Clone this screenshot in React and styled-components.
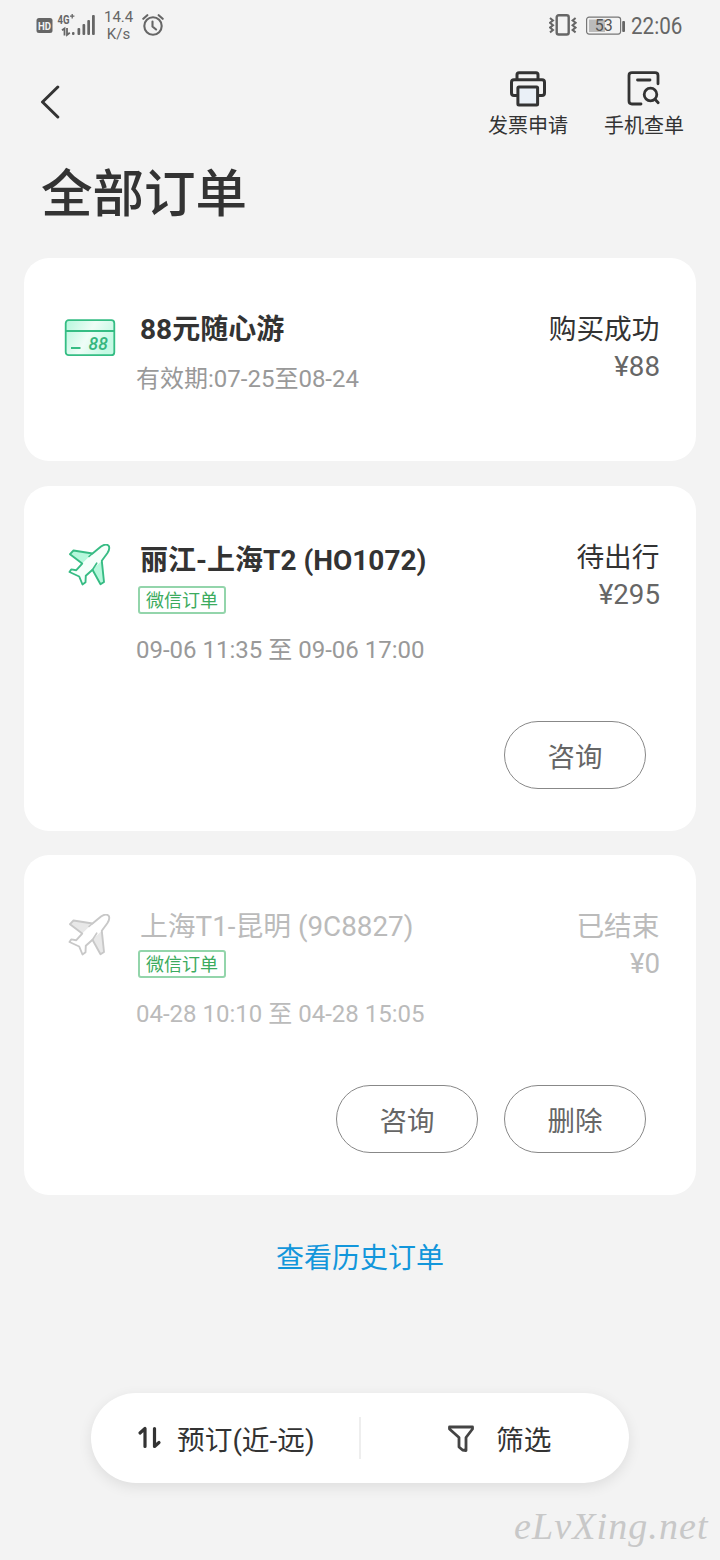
// libraries
import styled, { createGlobalStyle } from "styled-components"

const GlobalStyle = createGlobalStyle`
  * {
    box-sizing: border-box;
  }

  body {
    margin: 0;
    background: #f3f3f3;
    color: #333;
    font-family: Roboto, "Noto Sans CJK SC", sans-serif;
  }

  svg {
    display: block;
    flex: none;
  }
`

const Page = styled.main`
  display: flex;
  flex-direction: column;
  width: 720px;
  height: 1560px;
  overflow: hidden;
  background: #f3f3f3;
`

const StatusBar = styled.div`
  display: flex;
  justify-content: space-between;
  height: 50px;
  padding: 0 38px 0 36px;
  color: #666;
`

const StatusGroup = styled.div`
  display: flex;
  align-items: center;
`

const Speed = styled.div`
  width: 29px;
  margin: 1px 9px 0 8px;
  font-size: 15px;
  line-height: 17px;
  text-align: center;
`

const Battery = styled.div`
  margin: 1px 5px 0 9px;
`

const Clock = styled.time`
  width: 51px;
  height: 50px;
  font-size: 24px;
  line-height: 52px;
  white-space: nowrap;

  span {
    display: inline-block;
    transform: scaleX(0.86);
    transform-origin: left;
  }
`

const NavBar = styled.header`
  display: flex;
  justify-content: space-between;
  height: 106px;
  padding: 20px 36px 0 40px;
`

const BackButton = styled.button`
  align-self: flex-start;
  margin-top: 15px;
  padding: 0;
  border: none;
  background: none;
`

const NavActions = styled.nav`
  display: flex;
  gap: 36px;
`

const NavAction = styled.a`
  display: flex;
  flex-direction: column;
  align-items: center;
  width: 80px;
  height: 70px;
  gap: 5px;
  font-size: 20px;
  line-height: 26px;
  white-space: nowrap;
`

const PageTitle = styled.h1`
  height: 102px;
  margin: 0;
  padding: 2px 0 0 41px;
  font-size: 51.5px;
  font-weight: 500;
  line-height: 74px;
`

const OrderList = styled.section`
  display: flex;
  flex-direction: column;
  gap: 24.5px;
  padding: 0 24px;
`

const Card = styled.article`
  height: ${(p) => p.$height}px;
  padding: 53px 36px 0 40px;
  border-radius: 25px;
  background: #fff;
`

const CardTop = styled.div`
  display: flex;
`

const IconBox = styled.div`
  width: 72px;
  padding-top: ${(p) => p.$top}px;
`

const Info = styled.div`
  flex: 1;
`

const OrderTitle = styled.h2`
  height: ${(p) => (p.$tall ? 42 : 37)}px;
  margin: 0 0 0 4px;
  color: ${(p) => (p.$ended ? "#bbb" : "#333")};
  font-size: ${(p) => (p.$ended ? 27.8 : 28)}px;
  font-weight: ${(p) => (p.$ended ? 400 : 700)};
  line-height: ${(p) => (p.$tall ? 43 : 38)}px;
  white-space: nowrap;
`

const Tag = styled.div`
  width: 88px;
  height: 28px;
  margin: 5px 0 18px 2px;
  border: 2px solid #93d5ab;
  border-radius: 3px;
  color: #3cab5e;
  font-size: 18px;
  line-height: 26px;
  text-align: center;
`

const Period = styled.div`
  height: 36px;
  margin-top: ${(p) => p.$top || 0}px;
  color: ${(p) => (p.$ended ? "#bbb" : "#999")};
  font-size: 24px;
  line-height: 37px;
  white-space: nowrap;
`

const State = styled.div`
  color: ${(p) => (p.$ended ? "#bbb" : "#333")};
  font-size: 27.7px;
  line-height: 38px;
  text-align: right;
  white-space: nowrap;
`

const StateName = styled.div`
  height: 37px;
  padding-right: 0.5px;
`

const Price = styled.div`
  color: ${(p) => (p.$ended ? "#bbb" : "#666")};
`

const CardActions = styled.div`
  display: flex;
  justify-content: flex-end;
  gap: 26px;
  margin-top: 53px;
  padding-right: 14px;
`

const PillButton = styled.button`
  width: 142px;
  height: 68px;
  padding: 5px 0 0;
  border: 1px solid #888;
  border-radius: 34px;
  background: #fff;
  color: #666;
  font-family: inherit;
  font-size: 27.5px;
  line-height: 61px;
`

const HistoryLink = styled.a`
  align-self: center;
  height: 40px;
  margin-top: 44px;
  color: #1296db;
  font-size: 28px;
  line-height: 40px;
`

const FilterBar = styled.footer`
  display: flex;
  align-items: center;
  align-self: center;
  width: 538px;
  height: 90px;
  margin-top: 114px;
  border-radius: 45px;
  background: #fff;
  box-shadow: 0 4px 14px rgba(0, 0, 0, 0.09);
`

const FilterItem = styled.div`
  display: flex;
  align-items: center;
  width: 268px;
  height: 90px;
  padding-left: ${(p) => p.$left}px;
  gap: ${(p) => p.$gap}px;
  font-size: 27.7px;
  line-height: 40px;
  white-space: nowrap;
`

const FilterLabel = styled.span`
  height: 40px;
  margin-top: 5px;
`

const Divider = styled.span`
  width: 2px;
  height: 42px;
  background: #eee;
`

const Watermark = styled.div`
  align-self: flex-end;
  width: 206px;
  height: 50px;
  margin-top: 18px;
  color: #c8c8c8;
  font-family: "Liberation Serif", serif;
  font-size: 38px;
  font-style: italic;
  letter-spacing: 1.1px;
  line-height: 50px;
  white-space: nowrap;
`

const SignalIcon = () => (
  <svg width="60" height="26" viewBox="0 0 60 26" fill="#666">
    <rect x="0.5" y="6" width="16" height="15" rx="2.5" />
    <text x="2" y="17.5" fontSize="10" fontWeight="700" fill="#f3f3f3" textLength="13" lengthAdjust="spacingAndGlyphs">HD</text>
    <text x="21.5" y="12" fontSize="12" fontWeight="700" textLength="12" lengthAdjust="spacingAndGlyphs">4G</text>
    <path d="M34 4.2h4.4M36.2 2v4.4" stroke="#666" strokeWidth="1.3" />
    <path d="M26 18.2l2.5-1.8v7M31 16v7l2.8-2.2" fill="none" stroke="#666" strokeWidth="1.8" />
    <rect x="36" y="20" width="2.5" height="3" rx="1" />
    <rect x="41.5" y="16" width="2.7" height="7" rx="1" />
    <rect x="46.5" y="12" width="2.7" height="11" rx="1" />
    <rect x="51.3" y="8" width="2.7" height="15" rx="1" />
    <rect x="56" y="3" width="2.8" height="20" rx="1" />
  </svg>
)

const AlarmIcon = () => (
  <svg width="22" height="24" viewBox="0 0 22 24" fill="none" stroke="#666" strokeWidth="2.1" strokeLinecap="round">
    <circle cx="11" cy="13" r="8.7" />
    <path d="M10.5 8.5v5l3.6 3M1.3 5.8l4-3.6M20.7 5.8l-4-3.6" />
  </svg>
)

const VibrateIcon = () => (
  <svg width="28" height="24" viewBox="0 0 28 24" fill="none" stroke="#666" strokeWidth="2">
    <rect x="7.7" y="2.2" width="12" height="19.3" rx="2" strokeWidth="2.4" />
    <path d="M1 5l3 2.5-3 2.3 3 2.4-3 2.4 3 2.4-3 2.4M26.6 5l-3 2.5 3 2.3-3 2.4 3 2.4-3 2.4 3 2.4" />
  </svg>
)

const BatteryIcon = () => (
  <svg width="40" height="20" viewBox="0 0 40 20">
    <rect x="0.6" y="1.1" width="34" height="17" rx="2.5" fill="none" stroke="#777" strokeWidth="1.2" />
    <rect x="3" y="3.5" width="16" height="12.5" fill="#bbb" />
    <rect x="36.2" y="5" width="2.8" height="11" rx="1" fill="#666" />
    <text x="8.8" y="15.2" fontSize="16" fill="#555">53</text>
  </svg>
)

const BackIcon = () => (
  <svg width="22" height="34" viewBox="0 0 22 34" fill="none" stroke="#333" strokeWidth="3" strokeLinecap="round" strokeLinejoin="round">
    <path d="M17.8 2L2.5 17l15.3 15" />
  </svg>
)

const PrinterIcon = () => (
  <svg width="40" height="38" viewBox="0 0 40 38" fill="none" stroke="#333" strokeWidth="3" strokeLinejoin="round" strokeLinecap="round">
    <path d="M9 9.3V4.7Q9 2.7 11 2.7h17Q30 2.7 30 4.7v4.6" />
    <path d="M9.5 25.5H6Q3.5 25.5 3.5 23V12.3Q3.5 9.8 6 9.8h28Q36.5 9.8 36.5 12.3V23Q36.5 25.5 34 25.5h-3.5" />
    <rect x="9.9" y="17" width="19.7" height="18" rx="1" fill="#eaf0f7" />
  </svg>
)

const SearchOrderIcon = () => (
  <svg width="40" height="38" viewBox="0 0 40 38" fill="none" stroke="#333" strokeWidth="2.8" strokeLinejoin="round" strokeLinecap="round">
    <path d="M17 34H8Q5 34 5 31V5.5Q5 2.7 8 2.7h23Q34 2.7 34 5.5v8.3" />
    <path d="M13.5 10h12.5" />
    <circle cx="26.5" cy="24.5" r="6.3" />
    <path d="M31.2 29.5l3 3.3" />
  </svg>
)

const PassIcon = () => (
  <svg width="52" height="40" viewBox="0 0 52 40">
    <defs>
      <linearGradient id="pass" x1="0" y1="0" x2="1" y2="0.4">
        <stop offset="0" stopColor="#b5f7dc" />
        <stop offset="0.55" stopColor="#effdf7" />
        <stop offset="1" stopColor="#c6f9e4" />
      </linearGradient>
    </defs>
    <rect x="1.7" y="2.2" width="48.6" height="35" rx="3" fill="url(#pass)" stroke="#35bd84" strokeWidth="1.8" />
    <path d="M2 13h48M7 30h9.5" stroke="#35bd84" strokeWidth="2" />
    <text x="24.5" y="31.5" fontSize="17.5" fontStyle="italic" fontWeight="500" fill="#35b57d">88</text>
  </svg>
)

const PlaneIcon = ({ ended }) => {
  const line = ended ? "#c8c8c8" : "#37bc84"
  const wing = ended ? "#e8e8e8" : "#b6f8dc"
  const body = ended ? "#fff" : "#f6fffb"
  return (
    <svg width="48" height="44" viewBox="-4 0 48 44" fill="none" strokeLinejoin="round" strokeLinecap="round">
      <path
        d="M24.5 9.500L33 2.500Q38-.8 40.500 1.600 42.500 4.200 39.300 9.300L33.800 16.800 17.800 31.800 17.500 38.300 14.500 40.500 11.200 32.500 1.500 28 3.200 25.400 9.300 26.200z"
        fill={body}
      />
      <path d="M24.500 9.500L5.500 6.500 2 10.200 14.200 19.600z" fill={wing} />
      <path d="M33.800 16.800L36 38 32.500 40.300 24.500 25.600z" fill={wing} />
      <path
        d="M24.500 9.500L33 2.500Q38-.8 40.500 1.600 42.500 4.200 39.300 9.300L33.800 16.800 36 38 32.500 40.300 24.500 25.800 17.800 31.800 17.500 38.300 14.500 40.500 11.200 32.500 1.500 28 3.200 25.400 8.300 26.200 14.200 19.600 2 10.200 5.500 6.500z"
        stroke={line}
        strokeWidth="1.9"
      />
      <path d="M24.500 9.500l-3.500 3M28.700 19.200l-4.200 6.600" stroke={line} strokeWidth="1.6" />
    </svg>
  )
}

const SortIcon = () => (
  <svg width="26" height="26" viewBox="0 0 26 26" fill="none" stroke="#333" strokeWidth="3.2" strokeLinecap="round" strokeLinejoin="round">
    <path d="M4 8l5-4.500v18M18.500 3.500v18l4.500-4" />
  </svg>
)

const FilterIcon = () => (
  <svg width="28" height="28" viewBox="0 0 28 28" fill="none" stroke="#444" strokeWidth="2.8" strokeLinejoin="round">
    <path d="M2.500 3h23v2l-6.500 8.500v13l-3.500-.5-3.500-3v-9.500l-9.500-8.500z" />
  </svg>
)

const orders = [
  {
    id: 1,
    height: 203,
    icon: <PassIcon />,
    iconTop: 7,
    title: "88元随心游",
    period: "有效期:07-25至08-24",
    state: "购买成功",
    price: "¥88",
    actions: [],
  },
  {
    id: 2,
    height: 345,
    icon: <PlaneIcon />,
    iconTop: 5,
    title: "丽江-上海T2 (HO1072)",
    tag: "微信订单",
    period: "09-06 11:35 至 09-06 17:00",
    state: "待出行",
    price: "¥295",
    actions: ["咨询"],
  },
  {
    id: 3,
    height: 340,
    icon: <PlaneIcon ended />,
    iconTop: 6,
    title: "上海T1-昆明 (9C8827)",
    tag: "微信订单",
    period: "04-28 10:10 至 04-28 15:05",
    state: "已结束",
    price: "¥0",
    actions: ["咨询", "删除"],
    ended: true,
  },
]

const OrderCard = ({ order }) => (
  <Card $height={order.height}>
    <CardTop>
      <IconBox $top={order.iconTop}>{order.icon}</IconBox>
      <Info>
        <OrderTitle $tall={order.tag && !order.ended} $ended={order.ended}>
          {order.title}
        </OrderTitle>
        {order.tag && <Tag>{order.tag}</Tag>}
        <Period $top={order.tag ? 0 : 13} $ended={order.ended}>
          {order.period}
        </Period>
      </Info>
      <State $ended={order.ended}>
        <StateName>{order.state}</StateName>
        <Price $ended={order.ended}>{order.price}</Price>
      </State>
    </CardTop>
    {order.actions.length > 0 && (
      <CardActions>
        {order.actions.map((a) => (
          <PillButton key={a}>{a}</PillButton>
        ))}
      </CardActions>
    )}
  </Card>
)

const App = () => {
  return (
    <>
      <GlobalStyle />
      <Page>
        <StatusBar>
          <StatusGroup>
            <SignalIcon />
            <Speed>
              14.4
              <br />
              K/s
            </Speed>
            <AlarmIcon />
          </StatusGroup>
          <StatusGroup>
            <VibrateIcon />
            <Battery>
              <BatteryIcon />
            </Battery>
            <Clock>
              <span>22:06</span>
            </Clock>
          </StatusGroup>
        </StatusBar>
        <NavBar>
          <BackButton aria-label="返回">
            <BackIcon />
          </BackButton>
          <NavActions>
            <NavAction>
              <PrinterIcon />
              发票申请
            </NavAction>
            <NavAction>
              <SearchOrderIcon />
              手机查单
            </NavAction>
          </NavActions>
        </NavBar>
        <PageTitle>全部订单</PageTitle>
        <OrderList>
          {orders.map((o) => (
            <OrderCard key={o.id} order={o} />
          ))}
        </OrderList>
        <HistoryLink>查看历史订单</HistoryLink>
        <FilterBar>
          <FilterItem $left={45} $gap={15}>
            <SortIcon />
            <FilterLabel>预订(近-远)</FilterLabel>
          </FilterItem>
          <Divider />
          <FilterItem $left={86} $gap={21}>
            <FilterIcon />
            <FilterLabel>筛选</FilterLabel>
          </FilterItem>
        </FilterBar>
        <Watermark>eLvXing.net</Watermark>
      </Page>
    </>
  )
}

export default App
